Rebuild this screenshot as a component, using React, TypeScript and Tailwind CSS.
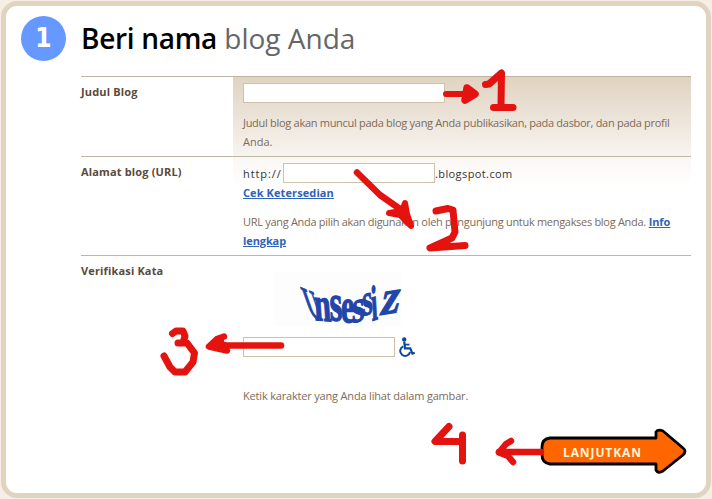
import { type ReactNode } from 'react';

// =============================================================================
// FORM ROW
// =============================================================================

function FormRow({
  label, className, children,
}: {
  label: string;
  className: string;
  children: ReactNode;
}) {
  return (
    <div className={`flex border-t border-[#bdb6a0] ${className}`}>
      <div className="w-[152px] shrink-0 pt-[7px] text-[11px] leading-4 font-bold tracking-[0.15px] text-[#5c4a3b]">
        {label}
      </div>
      {children}
    </div>
  );
}

// =============================================================================
// CAPTCHA
// =============================================================================

const letters = [
  { char: 'U', transform: 'matrix(0.75 0.3 0.6 1.7 37 44)' },
  { char: 'n', transform: 'matrix(1.15 0.1 0.12 1.85 42 48)' },
  { char: 's', transform: 'matrix(1.25 0.1 0.05 2 57 48)' },
  { char: 'e', transform: 'matrix(1.15 0.05 0 1.85 68 50)' },
  { char: 's', transform: 'matrix(1.25 -0.3 0 1.75 79 51)' },
  { char: 's', transform: 'matrix(1 -0.3 0.1 1.7 90 44)' },
  { char: 'i', transform: 'matrix(0.85 -0.3 0.1 1.9 99 49)' },
  { char: 'z', transform: 'matrix(1.6 -0.25 -0.4 1.9 106 43)' },
];

function Captcha() {
  return (
    <svg width="128" height="54" viewBox="0 0 128 54" className="ml-[30px] block overflow-visible bg-[#fdfdfd]">
      <g fill="#2145a8" stroke="#2145a8" strokeWidth="0.7" fontFamily="'Liberation Serif', serif" fontWeight="700" fontSize="26">
        {letters.map((l, i) => (
          <text key={i} transform={l.transform}>{l.char}</text>
        ))}
      </g>
    </svg>
  );
}

function WheelchairIcon() {
  return (
    <svg width="17" height="20" viewBox="0 0 17 20" fill="none" stroke="#10479b" className="ml-1">
      <circle cx="5.2" cy="2.4" r="2.2" fill="#10479b" stroke="none" />
      <path d="M5.2 4.5 L6 11.3 H11.3 L13.4 16.6 L15.8 15.7" strokeWidth="2.2" />
      <path d="M5.8 7.6 H10.5" strokeWidth="1.8" />
      <path d="M4.3 9.3 A5 5 0 1 0 11.1 15" strokeWidth="2" />
    </svg>
  );
}

// =============================================================================
// HAND-DRAWN STEP MARKS
// =============================================================================

function Marks() {
  return (
    <svg
      className="pointer-events-none absolute inset-0"
      width="712" height="499" viewBox="0 0 712 499"
      fill="none" stroke="#e5130f" strokeLinecap="round" strokeLinejoin="round"
    >
      {/* 1 */}
      <path d="M446 94 H470" strokeWidth="6" />
      <path d="M467 88 L475 94 L465 100 Z" fill="#e5130f" strokeWidth="7.5" />
      <path d="M485.5 84.5 L489 84 L501.5 73 L501 106" strokeWidth="7" />
      <path d="M493.5 107.5 H513" strokeWidth="7" />

      {/* 2 */}
      <path d="M357 172.5 L380 195 L400 209 L410 223" strokeWidth="6.5" />
      <path d="M405 203 L407 214 L411 226 L400 215 L389 213 L402 211 Z" fill="#e5130f" strokeWidth="6" />
      <path d="M436 211 L448 208.500 L453 210 L455 232 L452 238 L430 248 L465 245.500" strokeWidth="7" />

      {/* 3 */}
      <path d="M281 345.5 H211" strokeWidth="6.5" />
      <path d="M224 336.500 L217 339 L209 346.500 L227 350.500 L224 345" fill="#e5130f" strokeWidth="6.5" />
      <path d="M172.500 333.500 L176 331 H183 L185 336 L183 343 H178 H187 L194.500 353 L193 362 L185 372 H175 L170 367 L164 356" strokeWidth="7" />

      {/* 4 */}
      <path d="M449 426.500 L435 441.500 H462" strokeWidth="7" />
      <path d="M462.500 435 V461" strokeWidth="7" />
      <path d="M499 452 H541" strokeWidth="6.5" />
      <path d="M511 441 L506 444 L499 452.500 L508 456 L513 462" strokeWidth="6.5" />
    </svg>
  );
}

// =============================================================================
// MAIN PAGE
// =============================================================================

export default function App() {
  return (
    <div className="relative h-[499px] w-[712px] overflow-hidden bg-[#f6eee4] p-px font-['Open_Sans',sans-serif]">
      <div className="h-[497px] w-[710px] rounded-[16px] border-[5px] border-[#e0d4c1] bg-white">
        {/* Header */}
        <div className="flex h-[70px] pt-[10px] pl-[15px]">
          <div className="flex h-[45px] w-[45px] items-center justify-center rounded-full bg-[#6699ff] pb-px font-['DejaVu_Sans_Condensed','DejaVu_Sans',sans-serif] text-[26px] leading-none font-bold text-white">
            1
          </div>
          <h1 className="ml-[15px] pt-[2px] text-[28px] leading-[40px] whitespace-nowrap text-[#666]">
            <strong className="font-semibold tracking-[-0.3px] text-black">Beri nama</strong>{' '}
            <span>blog Anda</span>
          </h1>
        </div>

        {/* Form */}
        <div className="ml-[75px] w-[610px] text-[11px] leading-[19px] text-[#7d6b58]">
          <FormRow label="Judul Blog" className="h-[80px]">
            <div className="flex-1 bg-linear-to-b from-[#e0d3c1] to-[#f8f4f0] pt-[6px] pl-[10px]">
              <input className="block h-5 w-[202px] border border-[#cfc2ac] bg-white outline-none" />
              <p className="mt-[10px] whitespace-nowrap">
                <span className="tracking-[-0.29px]">Judul blog akan muncul pada blog yang Anda publikasikan, pada dasbor, dan pada profil</span>
                <br />
                Anda.
              </p>
            </div>
          </FormRow>

          <FormRow label="Alamat blog (URL)" className="h-[99px]">
            <div className="flex-1 bg-linear-to-b from-[#faf7f4] to-white to-30% pt-[6px] pl-[10px]">
              <div className="flex h-5 items-center text-[#333]">
                <span className="w-10 tracking-[0.9px]">http://</span>
                <input className="h-5 w-[152px] border border-[#cfc2ac] bg-white outline-none" />
                <span className="tracking-[0.4px]">.blogspot.com</span>
              </div>
              <a className="block font-bold tracking-[0.1px] text-[#2f63b8] underline">Cek Ketersedian</a>
              <p className="mt-[10px] whitespace-nowrap">
                <span className="tracking-[-0.3px]">URL yang Anda pilih akan digunakan oleh pengunjung untuk mengakses blog Anda.</span>{' '}
                <a className="font-bold tracking-[-0.1px] text-[#2f63b8] underline">Info<br />lengkap</a>
              </p>
            </div>
          </FormRow>

          <FormRow label="Verifikasi Kata" className="h-[180px]">
            <div className="flex-1 pt-[16px] pl-[10px]">
              <Captcha />
              <div className="mt-[11px] flex items-center">
                <input className="h-5 w-[152px] border border-[#cfc2ac] bg-white outline-none" />
                <WheelchairIcon />
              </div>
              <p className="mt-[29px] tracking-[-0.18px]">Ketik karakter yang Anda lihat dalam gambar.</p>
            </div>
          </FormRow>
        </div>

        {/* Submit */}
        <div className="-mt-[7px] ml-[534px] grid h-[46px] w-[148px] items-center">
          <svg width="148" height="46" viewBox="0 0 148 46" className="col-start-1 row-start-1">
            <path
              d="M10 10 H116 V4 Q118 1 123 3 L143 20 Q147 23 143 27 L123 43 Q118 46 116 42 V36 H10 Q2 35 2 27 V19 Q2 11 10 10 Z"
              fill="#ff6600" stroke="#000" strokeWidth="2.8" strokeLinejoin="round"
            />
          </svg>
          <span className="col-start-1 row-start-1 pt-[3px] pl-[23px] text-[12px] font-bold tracking-[0.9px] text-[#fff5d6]">
            LANJUTKAN
          </span>
        </div>
      </div>

      <Marks />
    </div>
  );
}
